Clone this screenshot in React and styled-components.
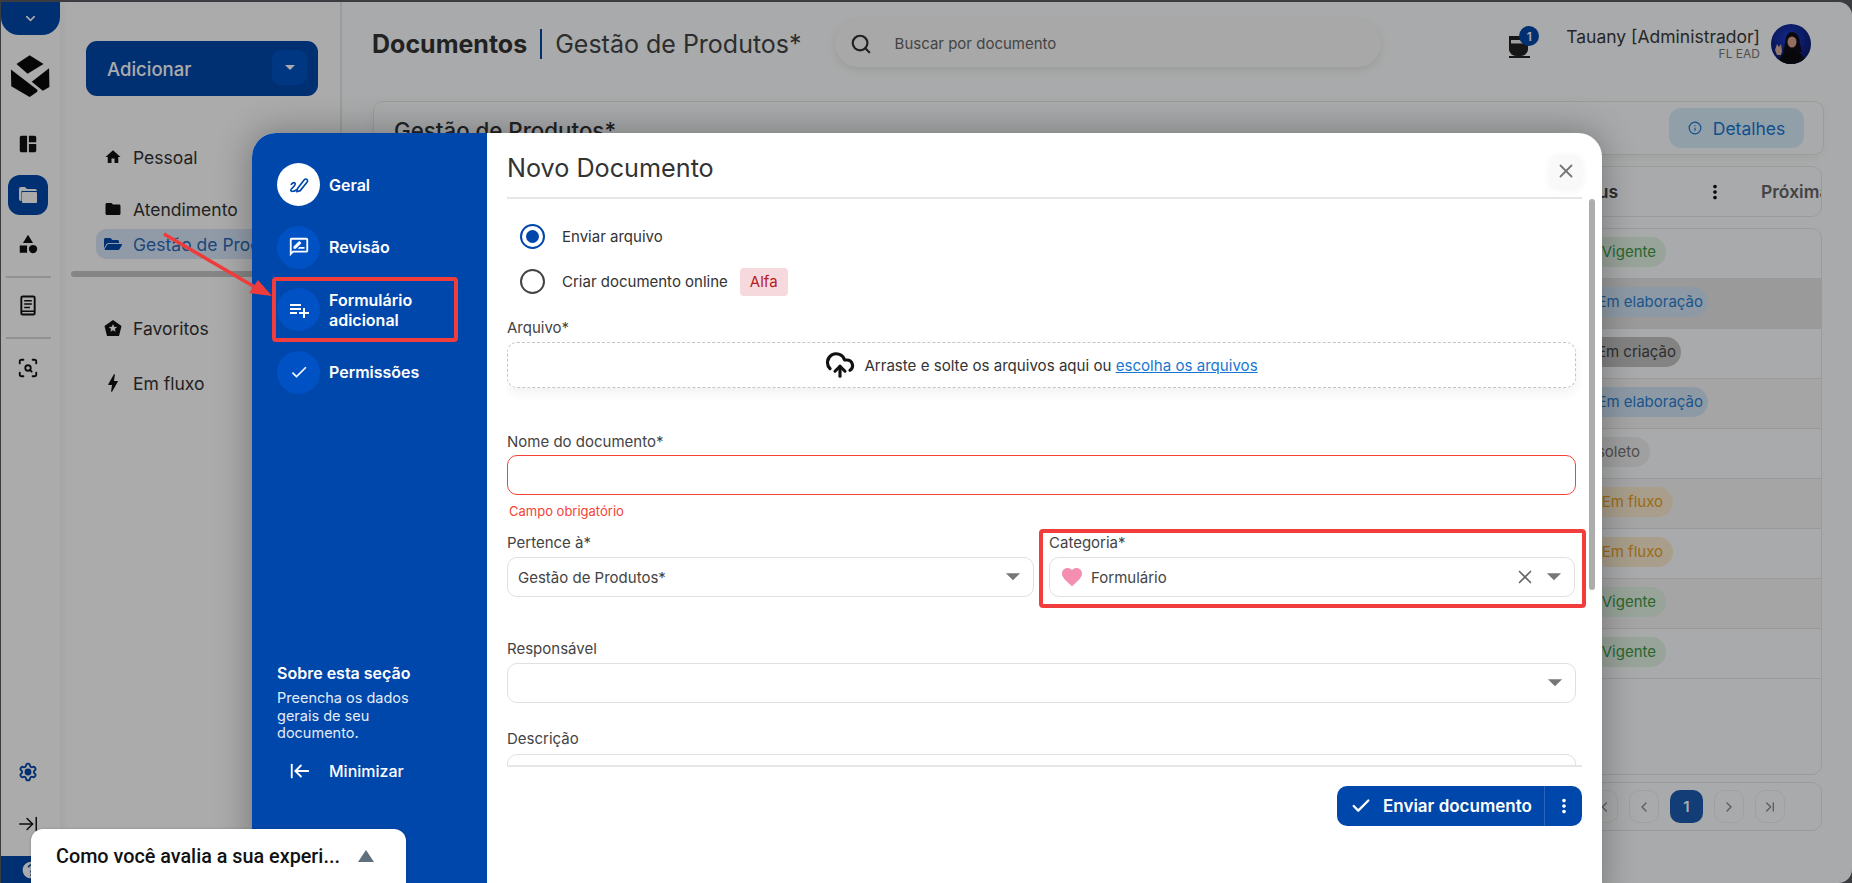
import styled, { createGlobalStyle } from "styled-components";
import {
    ArrowLeftToLine, ArrowRightToLine, Check, ChevronDown, ChevronFirst, ChevronLast, ChevronLeft, ChevronRight,
    CloudUpload, Info, ScanSearch, Search, Settings, X,
} from "lucide-react";
import {
    MdArrowDropDown, MdBolt, MdCategory, MdFavorite, MdFolder, MdHome, MdMoreVert,
    MdOutlineRateReview, MdPlaylistAdd, MdSpaceDashboard, MdCheck, MdHelp,
} from "react-icons/md";
import { FaFolderOpen } from "react-icons/fa";

const BLUE = "#0047ab";
const FONT = `Inter, "Noto Sans", sans-serif`;

const Global = createGlobalStyle`
    html, body { margin: 0; padding: 0; height: 100%; overflow: hidden; background: #3a3c40; }
    * { box-sizing: border-box; }
    body { font-family: ${FONT}; color: #333; }
`;

const Frame = styled.div`
    position: relative;
    width: 1852px;
    height: 883px;
    overflow: hidden;
    padding: 2px 0 0 1px;
`;

const Page = styled.div`
    display: flex;
    height: 881px;
    background: #fdfeff;
    border-radius: 0 14px 14px 0;
    overflow: hidden;
`;

const Rail = styled.nav`
    width: 59px;
    flex: none;
    display: flex;
    flex-direction: column;
    align-items: center;
    background: #fff;
    color: #111;
`;

const RailToggle = styled.div`
    width: 100%;
    height: 33px;
    flex: none;
    background: ${BLUE};
    color: #fff;
    border-radius: 0 0 18px 18px;
    display: flex;
    align-items: center;
    justify-content: center;
`;

const RailLogo = styled.svg`
    margin: 20px 1px 0 0;
    width: 40px;
    height: 43px;
    flex: none;
`;

const RailSlot = styled.div`
    width: 40px;
    height: 40px;
    flex: none;
    margin-top: ${({ $top = 9 }) => $top}px;
    margin-right: 5px;
    display: flex;
    align-items: center;
    justify-content: center;
    border-radius: 12px;
    background: ${({ $active }) => ($active ? BLUE : "transparent")};
    color: ${({ $active, $tint }) => ($active ? "#fff" : $tint || "#111")};
`;

const RailRule = styled.hr`
    width: 45px;
    height: 2px;
    flex: none;
    margin: 12px 4px 0 0;
    border: 0;
    background: #d8d8d8;
`;

const RailSpring = styled.div`
    flex: 1;
`;

const RailHelp = styled.div`
    width: 100%;
    height: 27px;
    flex: none;
    margin-top: 12px;
    background: ${BLUE};
    color: #fff;
    display: flex;
    align-items: center;
    justify-content: center;
`;

const GearIcon = styled(Settings)`
    circle {
        fill: currentColor;
    }
`;

const Side = styled.aside`
    width: 282px;
    flex: none;
    padding: 39px 0 0 26px;
    border-right: 2px solid #e9e9e9;
    background: linear-gradient(90deg, #f7f7f7 0, #fff 8px);
`;

const AddButton = styled.div`
    width: 232px;
    height: 55px;
    padding: 0 11px 0 21px;
    display: flex;
    align-items: center;
    justify-content: space-between;
    border-radius: 11px;
    background: ${BLUE};
    color: #fff;
    font-size: 18.5px;
    font-weight: 500;
`;

const AddCaret = styled.div`
    width: 35px;
    height: 35px;
    margin-top: -3px;
    border-radius: 9px;
    background: #0052c4;
    display: flex;
    align-items: center;
    justify-content: center;
`;

const SideItem = styled.div`
    height: 30px;
    margin: ${({ $top = 0 }) => $top}px 0 0 10px;
    padding-left: 8px;
    display: flex;
    align-items: center;
    gap: 11px;
    font-size: 17.5px;
    border-radius: 10px;
    width: 300px;
    color: ${({ $on }) => ($on ? "#2f6bb8" : "#333")};
    background: ${({ $on }) => ($on ? "#d9e8fb" : "transparent")};

    svg {
        flex: none;
        width: 18px;
        height: 18px;
        color: ${({ $on }) => ($on ? BLUE : "#111")};
    }
`;

const BoltIcon = styled(MdBolt)`
    transform: scale(1.3);
`;

const SideScroll = styled.div`
    width: 250px;
    height: 6px;
    margin: 12px 0 0 -15px;
    border-radius: 3px;
    background: #c6c6c6;
`;

const Main = styled.main`
    flex: 1;
    min-width: 0;
    padding: 18px 28px 0 31px;
    display: flex;
    flex-direction: column;
`;

const TopBar = styled.header`
    height: 47px;
    flex: none;
    display: flex;
    align-items: center;
`;

const PageTitle = styled.h1`
    margin: 0 0 0 -1px;
    font-size: 25px;
    font-weight: 700;
    color: #333;
`;

const PageSub = styled.span`
    margin-left: 13px;
    padding-left: 13px;
    border-left: 2px solid #0047ab;
    font-size: 25px;
    line-height: 30px;
    color: #444;
`;

const SearchBox = styled.div`
    width: 546px;
    height: 47px;
    margin-left: 33px;
    padding-left: 15px;
    display: flex;
    align-items: center;
    gap: 23px;
    border-radius: 24px;
    background: #fbfbfb;
    box-shadow: 0 3px 10px rgba(0, 0, 0, 0.1);
    color: #666;
    font-size: 15px;
`;

const TopRight = styled.div`
    margin-left: auto;
    margin-right: 13px;
    display: flex;
    align-items: center;
`;

const Cup = styled.div`
    position: relative;
    width: 22px;
    height: 24px;
    margin: 5px 35px 0 0;
`;

const CupBadge = styled.span`
    position: absolute;
    top: -8px;
    left: 10px;
    width: 20px;
    height: 20px;
    border-radius: 50%;
    background: ${BLUE};
    color: #fff;
    font-size: 12px;
    font-weight: 600;
    display: flex;
    align-items: center;
    justify-content: center;
`;

const UserText = styled.div`
    text-align: right;
    margin-right: 11px;
`;

const UserName = styled.div`
    font-size: 17.5px;
    line-height: 20px;
    color: #3a3a3a;
`;

const UserOrg = styled.div`
    font-size: 12px;
    line-height: 14px;
    color: #777;
`;

const TitleCard = styled.section`
    height: 54px;
    flex: none;
    margin-top: 34px;
    padding: 0 19px 0 20px;
    display: flex;
    align-items: center;
    justify-content: space-between;
    border: 1px solid #e8e8e8;
    border-radius: 10px;
    box-shadow: 0 3px 10px rgba(0, 0, 0, 0.05);
`;

const CardTitle = styled.h2`
    margin: 4px 0 0;
    font-size: 22.3px;
    font-weight: 500;
`;

const DetailsButton = styled.div`
    width: 135px;
    height: 40px;
    display: flex;
    align-items: center;
    justify-content: center;
    gap: 11px;
    border-radius: 12px;
    background: #d8eefc;
    color: #1976d2;
    font-size: 17.5px;
`;

const HeadCard = styled.div`
    height: 51px;
    flex: none;
    margin: 11px 2px 0 0;
    padding-left: 1190px;
    display: flex;
    align-items: center;
    overflow: hidden;
    border: 1px solid #e8e8e8;
    border-radius: 10px;
    font-size: 17.5px;
    font-weight: 600;
    color: #666;
`;

const HeadStatus = styled.span`
    width: 140px;
    flex: none;
    color: #444;
`;

const HeadNext = styled.span`
    margin-left: 35px;
    flex: none;
    white-space: nowrap;
`;

const HeadDots = styled(MdMoreVert)`
    flex: none;
    color: #111;
`;

const Table = styled.div`
    height: 547px;
    flex: none;
    margin: 11px 2px 0 0;
    border: 1px solid #e8e8e8;
    border-radius: 10px;
    overflow: hidden;
`;

const Row = styled.div`
    height: ${({ $h = 50 }) => $h}px;
    display: flex;
    align-items: center;
    border-bottom: 1px solid #e4e4e4;
    background: ${({ $tone }) => $tone};
`;

const tones = {
    ok: ["#e3f3e4", "#3f9a45"],
    work: ["#d3e6f8", "#2a7fd0"],
    draft: ["#c4c4c4", "#444"],
    old: ["#efefef", "#777"],
    flow: ["#fbecd0", "#ea9f25"],
};

const Pill = styled.span`
    height: 30px;
    width: ${({ $w }) => $w}px;
    margin: -4px 0 0 ${({ $left }) => $left}px;
    padding-right: ${({ $pad }) => $pad}px;
    display: flex;
    align-items: center;
    justify-content: flex-end;
    border-radius: 15px;
    font-size: 15px;
    white-space: nowrap;
    background: ${({ $kind }) => tones[$kind][0]};
    color: ${({ $kind }) => tones[$kind][1]};
`;

const Pager = styled.div`
    height: 49px;
    flex: none;
    margin: 7px 2px 0 0;
    padding-right: 36px;
    display: flex;
    align-items: center;
    justify-content: flex-end;
    gap: 11px;
    border: 1px solid #e8e8e8;
    border-radius: 10px;
`;

const PageButton = styled.div`
    width: ${({ $on }) => ($on ? 33 : 30)}px;
    height: 33px;
    display: flex;
    align-items: center;
    justify-content: center;
    border-radius: 10px;
    border: 1px solid ${({ $on }) => ($on ? "transparent" : "#efefef")};
    background: ${({ $on }) => ($on ? "#1d5cb0" : "transparent")};
    color: ${({ $on }) => ($on ? "#fff" : "#8a8a8a")};
    font-size: 15px;
    font-weight: 600;
`;

const Dim = styled.div`
    position: absolute;
    inset: 2px 0 0 1px;
    background: rgba(0, 0, 0, 0.33);
    border-radius: 0 14px 14px 0;
`;

const Modal = styled.div`
    position: absolute;
    left: 252px;
    top: 133px;
    width: 1350px;
    height: 780px;
    display: flex;
    border-radius: 24px;
    overflow: hidden;
    background: #fff;
`;

const ModalShadow = styled.div`
    position: absolute;
    left: 252px;
    top: 133px;
    width: 1350px;
    height: 780px;
    border-radius: 24px;
    box-shadow: 0 0 36px rgba(0, 0, 0, 0.32);
`;

const Steps = styled.div`
    width: 235px;
    flex: none;
    padding: 30px 20px 0 25px;
    display: flex;
    flex-direction: column;
    background: ${BLUE};
    color: #fff;
`;

const Step = styled.div`
    min-height: 43px;
    margin-bottom: 19.6px;
    display: flex;
    align-items: center;
    gap: 9px;
    font-size: 16px;
    font-weight: 600;
    line-height: 20px;
`;

const StepDot = styled.span`
    width: 43px;
    height: 43px;
    flex: none;
    border-radius: 50%;
    display: flex;
    align-items: center;
    justify-content: center;
    background: ${({ $on }) => ($on ? "#fff" : "#0052c4")};
    color: ${({ $on }) => ($on ? BLUE : "#fff")};
`;

const About = styled.div`
    margin-top: 250px;
    font-size: 14.5px;
    line-height: 17.5px;
    color: #e4ecf8;
`;

const AboutTitle = styled.div`
    margin-bottom: 6px;
    font-size: 16px;
    font-weight: 600;
    line-height: 20px;
    color: #fff;
`;

const Minimize = styled.div`
    margin-top: 18px;
    padding-left: 12px;
    display: flex;
    align-items: center;
    gap: 18px;
    font-size: 16px;
    font-weight: 500;
`;

const FormPane = styled.div`
    position: relative;
    flex: 1;
    min-width: 0;
    padding: 0 20px;
    display: flex;
    flex-direction: column;
`;

const FormHead = styled.div`
    height: 66px;
    flex: none;
    padding-top: 5px;
    display: flex;
    align-items: center;
    justify-content: space-between;
    border-bottom: 2px solid #e6e6e6;
`;

const FormTitle = styled.h2`
    margin: 0;
    font-size: 25.2px;
    font-weight: 400;
    color: #333;
`;

const CloseButton = styled.div`
    width: 32px;
    height: 32px;
    margin-top: 7px;
    display: flex;
    align-items: center;
    justify-content: center;
    border-radius: 8px;
    background: #f9f9f9;
    color: #777;
    box-shadow: 0 2px 8px rgba(0, 0, 0, 0.06);
`;

const FormBody = styled.div`
    height: 566px;
    flex: none;
    padding: 15px 6px 0 0;
    overflow: hidden;
`;

const Thumb = styled.div`
    position: absolute;
    left: 1102px;
    top: 66px;
    width: 6px;
    height: 391px;
    border-radius: 3px;
    background: #adadad;
`;

const RadioRow = styled.div`
    height: 45px;
    padding-left: 13px;
    display: flex;
    align-items: center;
    font-size: 15px;
    color: #333;
`;

const RadioMark = styled.span`
    width: 25px;
    height: 25px;
    margin-right: 17px;
    flex: none;
    border-radius: 50%;
    border: 2px solid ${({ $on }) => ($on ? BLUE : "#444")};
    display: flex;
    align-items: center;
    justify-content: center;

    &::after {
        content: '';
        display: ${({ $on }) => ($on ? "block" : "none")};
        width: 13px;
        height: 13px;
        border-radius: 50%;
        background: ${BLUE};
    }
`;

const AlfaTag = styled.span`
    height: 28px;
    margin-left: 12px;
    padding: 0 10px;
    display: flex;
    align-items: center;
    border-radius: 4px;
    background: #f5d9dc;
    color: #b71c1c;
`;

const FieldLabel = styled.label`
    display: block;
    height: 20px;
    margin-top: ${({ $top = 0 }) => $top}px;
    font-size: 15px;
    line-height: 20px;
    color: #444;
`;

const DropZone = styled.div`
    height: 46px;
    margin-top: 4px;
    display: flex;
    align-items: center;
    justify-content: center;
    gap: 9px;
    border: 1px dashed #c4c4c4;
    border-radius: 10px;
    box-shadow: 0 6px 12px rgba(0, 0, 0, 0.05);
    font-size: 15.1px;
    color: #333;

    a {
        color: #1976d2;
        text-decoration: underline;
    }
`;

const TextBox = styled.div`
    height: 40px;
    margin-top: ${({ $top = 4 }) => $top}px;
    padding: 0 13px 0 10px;
    display: flex;
    align-items: center;
    gap: 7px;
    border: 1px solid ${({ $error }) => ($error ? "#f44336" : "#e0e0e0")};
    border-radius: 10px;
    font-size: 15px;
    color: #444;
`;

const ErrorText = styled.div`
    height: 16px;
    margin-top: 8px;
    padding-left: 2px;
    font-size: 13px;
    line-height: 16px;
    color: #f44336;
`;

const TwoCols = styled.div`
    margin-top: 14px;
    display: grid;
    grid-template-columns: 527px 526px;
    gap: 15px;
`;

const Grow = styled.span`
    flex: 1;
`;

const ClearIcon = styled(X)`
    margin-right: -3px;
    color: #666;
    flex: none;
`;

const Caret = styled(MdArrowDropDown)`
    margin: -2px -10px 0 -3px;
    color: #777;
    flex: none;
`;

const FormFoot = styled.div`
    padding-top: 19px;
    border-top: 2px solid #e6e6e6;
    display: flex;
    justify-content: flex-end;
`;

const SendButton = styled.div`
    width: 245px;
    height: 40px;
    display: flex;
    align-items: center;
    border-radius: 10px;
    background: ${BLUE};
    color: #fff;
    font-size: 17px;
    font-weight: 600;
`;

const SendMain = styled.div`
    width: 208px;
    height: 100%;
    padding-left: 13px;
    display: flex;
    align-items: center;
    gap: 11px;
    border-right: 1px solid #2a63b8;
`;

const SendMore = styled.div`
    flex: 1;
    display: flex;
    justify-content: center;
`;

const Survey = styled.div`
    position: absolute;
    left: 31px;
    bottom: 0;
    width: 375px;
    height: 54px;
    padding: 0 32px 0 25px;
    display: flex;
    align-items: center;
    justify-content: space-between;
    border-radius: 12px 12px 0 0;
    background: #fff;
    box-shadow: 0 0 3px rgba(0, 0, 0, 0.2);
    font-family: Roboto, sans-serif;
    font-size: 19.8px;
    font-weight: 500;
    color: #111;
`;

const SurveyCaret = styled.span`
    width: 0;
    height: 0;
    border-left: 8px solid transparent;
    border-right: 8px solid transparent;
    border-bottom: 12px solid #5f6f7c;
`;

const RedBox = styled.div`
    position: absolute;
    left: ${({ $x }) => $x}px;
    top: ${({ $y }) => $y}px;
    width: ${({ $w }) => $w}px;
    height: ${({ $h }) => $h}px;
    border: 4px solid #f23d3d;
    border-radius: 4px;
`;

const Arrow = styled.svg`
    position: absolute;
    left: 150px;
    top: 220px;
    width: 130px;
    height: 90px;
`;

const rows = [
    { label: "Vigente", kind: "ok", w: 76, left: 1216, pad: 10, tone: "transparent" },
    { label: "Em elaboração", kind: "work", w: 122, left: 1212, pad: 5, tone: "#e6e6e6" },
    { label: "Em criação", kind: "draft", w: 95, left: 1212, pad: 5, tone: "transparent" },
    { label: "Em elaboração", kind: "work", w: 122, left: 1212, pad: 5, tone: "#f7f7f7" },
    { label: "Obsoleto", kind: "old", w: 84, left: 1192, pad: 10, tone: "transparent" },
    { label: "Em fluxo", kind: "flow", w: 83, left: 1216, pad: 10, tone: "#f7f7f7" },
    { label: "Em fluxo", kind: "flow", w: 83, left: 1216, pad: 10, tone: "transparent" },
    { label: "Vigente", kind: "ok", w: 76, left: 1216, pad: 10, tone: "#f7f7f7" },
    { label: "Vigente", kind: "ok", w: 76, left: 1216, pad: 10, tone: "transparent" },
];

function Logo() {
    return (
        <RailLogo viewBox="34 46 114 124" fill="#0a0a0a">
            <polygon points="52,72 90,47 130,72 84,100" />
            <polygon points="146,84 147,138 128,149 96,123" />
            <polygon points="36,88 112,146 112,152 90,167 37,136" />
        </RailLogo>
    );
}

function RailFolderIcon() {
    return (
        <svg width="18" height="16" viewBox="0 0 18 16" fill="#fff">
            <path d="M0 2a2 2 0 0 1 2-2h4l2 2h8a2 2 0 0 1 2 2H2.5v10H2a2 2 0 0 1-2-2z" />
            <rect x="3" y="5" width="15" height="11" rx="1" />
        </svg>
    );
}

function DocIcon() {
    return (
        <svg width="18" height="21" viewBox="0 0 18 22" fill="none" stroke="#111" strokeWidth="2">
            <rect x="2" y="1.5" width="14" height="19" rx="1.5" />
            <path d="M5 6h8M5 9.5h8M5 13h6M2 17h14" strokeWidth="1.6" />
        </svg>
    );
}

function FavoriteIcon() {
    return (
        <svg viewBox="0 0 18 18">
            <path d="M9 1 17.5 7 15 17H3L.5 7z" fill="#111" />
            <path d="m9 5 1.2 2.7 2.9.3-2.2 1.9.7 2.9L9 11.3l-2.6 1.5.7-2.9L4.9 8l2.9-.3z" fill="#fff" />
        </svg>
    );
}

function SignIcon() {
    return (
        <svg width="22" height="22" viewBox="0 0 20 20" fill="none" stroke="currentColor" strokeWidth="1.5" strokeLinecap="round" strokeLinejoin="round">
            <path d="M8.5 13.5 15 5a1.7 1.7 0 0 1 2.6 2.1l-6.5 8-3 1z" />
            <path d="M3 9.5c1-2 4-2.5 3.5 0S2 13.5 2.5 15s3.5.5 5-.5" />
        </svg>
    );
}

function CupIcon() {
    return (
        <svg width="22" height="24" viewBox="0 0 22 24">
            <path d="M0 2h19v14a7 7 0 0 1-7 6H7a7 7 0 0 1-7-6z" fill="#222" />
            <rect x="2" y="6" width="15" height="3.5" fill="#eee" />
            <rect y="22" width="21" height="2" fill="#222" />
        </svg>
    );
}

function Avatar() {
    return (
        <svg width="40" height="40" viewBox="0 0 40 40">
            <defs>
                <radialGradient id="avatarBg" cx="0.45" cy="0.35" r="0.7">
                    <stop offset="0" stopColor="#1a3fd0" />
                    <stop offset="1" stopColor="#0a1560" />
                </radialGradient>
                <clipPath id="avatarClip"><circle cx="20" cy="20" r="20" /></clipPath>
            </defs>
            <g clipPath="url(#avatarClip)">
                <rect width="40" height="40" fill="url(#avatarBg)" />
                <path d="M14 20c0-8 3-12 7-12s8 4 8 12l2 8H12z" fill="#120d18" />
                <ellipse cx="21" cy="18" rx="4.5" ry="5.5" fill="#d9a48f" />
                <path d="M8 40c1-10 6-14 13-14s12 5 13 14z" fill="#0c0c12" />
                <path d="M4 26l2-6 2 3 2-3 1 7-1 4H6z" fill="#d9b0a0" />
            </g>
        </svg>
    );
}

export default function App() {
    return (
        <Frame>
            <Global />
            <Page>
                <Rail>
                    <RailToggle><ChevronDown size={15} strokeWidth={2.5} /></RailToggle>
                    <Logo />
                    <RailSlot $top={26}><MdSpaceDashboard size={22} /></RailSlot>
                    <RailSlot $top={11} $active><RailFolderIcon /></RailSlot>
                    <RailSlot><MdCategory size={22} /></RailSlot>
                    <RailRule />
                    <RailSlot $top={7}><DocIcon /></RailSlot>
                    <RailRule />
                    <RailSlot><ScanSearch size={22} /></RailSlot>
                    <RailSpring />
                    <RailSlot $tint={BLUE}><GearIcon size={20} strokeWidth={2.2} /></RailSlot>
                    <RailSlot $top={12}><ArrowRightToLine size={22} strokeWidth={1.6} /></RailSlot>
                    <RailHelp><MdHelp size={20} /></RailHelp>
                </Rail>

                <Side>
                    <AddButton>
                        Adicionar
                        <AddCaret><MdArrowDropDown size={24} /></AddCaret>
                    </AddButton>
                    <SideItem $top={46}><MdHome />Pessoal</SideItem>
                    <SideItem $top={22}><MdFolder />Atendimento</SideItem>
                    <SideItem $top={5} $on><FaFolderOpen />Gestão de Produtos*</SideItem>
                    <SideScroll />
                    <SideItem $top={36}><FavoriteIcon />Favoritos</SideItem>
                    <SideItem $top={25}><BoltIcon />Em fluxo</SideItem>
                </Side>

                <Main>
                    <TopBar>
                        <PageTitle>Documentos</PageTitle>
                        <PageSub>Gestão de Produtos*</PageSub>
                        <SearchBox>
                            <Search size={22} color="#333" strokeWidth={2.4} />
                            Buscar por documento
                        </SearchBox>
                        <TopRight>
                            <Cup>
                                <CupIcon />
                                <CupBadge>1</CupBadge>
                            </Cup>
                            <UserText>
                                <UserName>Tauany [Administrador]</UserName>
                                <UserOrg>FL EAD</UserOrg>
                            </UserText>
                            <Avatar />
                        </TopRight>
                    </TopBar>

                    <TitleCard>
                        <CardTitle>Gestão de Produtos*</CardTitle>
                        <DetailsButton><Info size={14} />Detalhes</DetailsButton>
                    </TitleCard>

                    <HeadCard>
                        <HeadStatus>Status</HeadStatus>
                        <HeadDots size={22} />
                        <HeadNext>Próxima</HeadNext>
                    </HeadCard>

                    <Table>
                        {rows.map((r, i) => (
                            <Row key={i} $tone={r.tone}>
                                <Pill $kind={r.kind} $w={r.w} $left={r.left} $pad={r.pad}>{r.label}</Pill>
                            </Row>
                        ))}
                    </Table>

                    <Pager>
                        <PageButton><ChevronFirst size={16} /></PageButton>
                        <PageButton><ChevronLeft size={16} /></PageButton>
                        <PageButton $on>1</PageButton>
                        <PageButton><ChevronRight size={16} /></PageButton>
                        <PageButton><ChevronLast size={16} /></PageButton>
                    </Pager>
                </Main>
            </Page>

            <Dim />
            <ModalShadow />
            <Modal>
                <Steps>
                    <Step><StepDot $on><SignIcon /></StepDot>Geral</Step>
                    <Step><StepDot><MdOutlineRateReview size={22} /></StepDot>Revisão</Step>
                    <Step><StepDot><MdPlaylistAdd size={24} /></StepDot>Formulário<br />adicional</Step>
                    <Step><StepDot><MdCheck size={20} /></StepDot>Permissões</Step>
                    <About>
                        <AboutTitle>Sobre esta seção</AboutTitle>
                        Preencha os dados<br />gerais de seu<br />documento.
                    </About>
                    <Minimize><ArrowLeftToLine size={22} strokeWidth={2} />Minimizar</Minimize>
                </Steps>

                <FormPane>
                    <FormHead>
                        <FormTitle>Novo Documento</FormTitle>
                        <CloseButton><X size={22} /></CloseButton>
                    </FormHead>
                    <Thumb />
                    <FormBody>
                        <RadioRow><RadioMark $on />Enviar arquivo</RadioRow>
                        <RadioRow><RadioMark />Criar documento online<AlfaTag>Alfa</AlfaTag></RadioRow>
                        <FieldLabel $top={14}>Arquivo*</FieldLabel>
                        <DropZone>
                            <CloudUpload size={30} color="#111" strokeWidth={2.5} />
                            <span>Arraste e solte os arquivos aqui ou <a>escolha os arquivos</a></span>
                        </DropZone>
                        <FieldLabel $top={44}>Nome do documento*</FieldLabel>
                        <TextBox $error $top={3} />
                        <ErrorText>Campo obrigatório</ErrorText>
                        <TwoCols>
                            <div>
                                <FieldLabel>Pertence à*</FieldLabel>
                                <TextBox>Gestão de Produtos*<Grow /><Caret size={34} /></TextBox>
                            </div>
                            <div>
                                <FieldLabel>Categoria*</FieldLabel>
                                <TextBox>
                                    <MdFavorite size={24} color="#f48fb1" />
                                    Formulário
                                    <Grow />
                                    <ClearIcon size={22} strokeWidth={1.8} />
                                    <Caret size={34} />
                                </TextBox>
                            </div>
                        </TwoCols>
                        <FieldLabel $top={42}>Responsável</FieldLabel>
                        <TextBox><Grow /><Caret size={34} /></TextBox>
                        <FieldLabel $top={26}>Descrição</FieldLabel>
                        <TextBox $top={5} />
                    </FormBody>
                    <FormFoot>
                        <SendButton>
                            <SendMain><Check size={22} strokeWidth={2.5} />Enviar documento</SendMain>
                            <SendMore><MdMoreVert size={22} /></SendMore>
                        </SendButton>
                    </FormFoot>
                </FormPane>
            </Modal>

            <Arrow viewBox="0 0 130 90">
                <line x1="14" y1="14" x2="110" y2="70" stroke="#ee3b3b" strokeWidth="3.5" />
                <polygon points="122,76 99,73 108,60" fill="#ee3b3b" />
            </Arrow>
            <RedBox $x={272} $y={277} $w={186} $h={65} />
            <RedBox $x={1039} $y={529} $w={547} $h={79} />

            <Survey>
                Como você avalia a sua experi...
                <SurveyCaret />
            </Survey>
        </Frame>
    );
}
